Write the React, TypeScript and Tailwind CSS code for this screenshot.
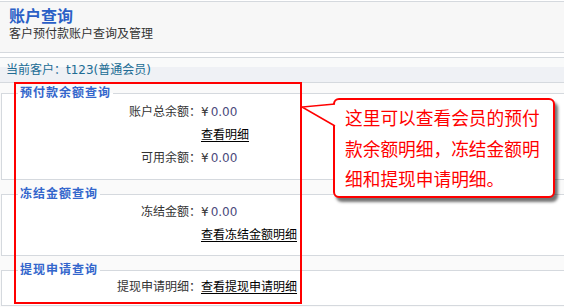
import React from "react";

const rowLabel = "text-right text-[#333]";

function Amount() {
  return (
    <span>
      <span className="text-[#333]">¥</span>
      <span className="ml-[2px] text-[#4a4a7c]">0.00</span>
    </span>
  );
}

export default function App() {
  return (
    <div className="relative h-[307px] w-[564px] overflow-hidden bg-[#fafafa] font-['DejaVu_Sans','Noto_Sans_CJK_SC',sans-serif] text-[12px]">
      <div className="h-[1px] bg-white" />
      <div className="h-[52px] border-y border-[#d5d9de] bg-[#f7f7f7] px-[9px] pt-[6px]">
        <h1 className="text-[16px] font-bold leading-[18px] text-[#2b5fc6]">账户查询</h1>
        <p className="leading-[16px] text-[#333]">客户预付款账户查询及管理</p>
      </div>
      <div className="h-[4px] bg-white" />
      <div className="h-[26px] border-y border-[#d5d9de] bg-[linear-gradient(#f9fafa_0,#f9fafa_9px,#eff1f5_9px)] pl-[6px] leading-[24px] text-[#206c94]">
        当前客户：t123(普通会员)
      </div>

      <fieldset className="ml-[1px] mt-[3px] border-y border-l border-[#d5d9de] bg-white pb-[9px] pl-[16px]">
        <legend className="px-[2px] text-[12px] font-bold leading-[14px] tracking-[1px] text-[#3366cc]">预付款余额查询</legend>
        <div className="-ml-[16px] grid grid-cols-[199px_1fr] pt-[1px] leading-[23px]">
          <div className={rowLabel}>账户总余额：</div>
          <Amount />
          <div />
          <a className="text-black underline underline-offset-2">查看明细</a>
          <div className={rowLabel}>可用余额：</div>
          <Amount />
        </div>
      </fieldset>

      <fieldset className="ml-[1px] mt-[7px] border-y border-l border-[#d5d9de] bg-white pb-[8px] pl-[16px]">
        <legend className="px-[2px] text-[12px] font-bold leading-[14px] tracking-[1px] text-[#3366cc]">冻结金额查询</legend>
        <div className="-ml-[16px] grid grid-cols-[199px_1fr] leading-[23px]">
          <div className={rowLabel}>冻结金额：</div>
          <Amount />
          <div />
          <a className="text-black underline underline-offset-2">查看冻结金额明细</a>
        </div>
      </fieldset>

      <fieldset className="ml-[1px] mt-[7px] border-y border-l border-[#d5d9de] bg-white pb-[8px] pl-[16px]">
        <legend className="px-[2px] text-[12px] font-bold leading-[14px] tracking-[1px] text-[#3366cc]">提现申请查询</legend>
        <div className="-ml-[16px] grid grid-cols-[199px_1fr] leading-[20px]">
          <div className={rowLabel}>提现申请明细：</div>
          <a className="text-black underline underline-offset-2">查看提现申请明细</a>
        </div>
      </fieldset>

      {/* annotation frame */}
      <div className="pointer-events-none absolute left-[14px] top-[82px] h-[222px] w-[288px] border-2 border-[#ff0000]" />

      {/* callout */}
      <div className="absolute left-[333px] top-[98px] h-[100px] w-[222px] rounded-[6px] border-2 border-[#ff0000] bg-white pl-[10px] pt-[4px] text-[17.7px] leading-[30.5px] whitespace-nowrap text-[#ff0000] shadow-[3px_4px_3px_rgba(0,0,0,0.55)]">
        这里可以查看会员的预付
        <br />
        款余额明细，冻结金额明
        <br />
        细和提现申请明细。
      </div>
      <svg className="absolute left-[300px] top-[100px]" width="37" height="30" viewBox="0 0 37 30">
        <polygon points="2,7 35,4 35,26" fill="white" />
        <polyline points="35,4 2,7 35,26" fill="none" stroke="#ff0000" strokeWidth="1.5" strokeLinejoin="miter" />
      </svg>
    </div>
  );
}
